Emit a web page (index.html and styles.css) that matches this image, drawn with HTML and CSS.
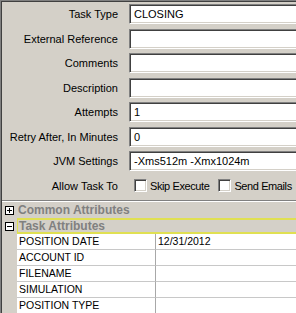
FILE: index.html
```html
<!DOCTYPE html>
<html>

<head>
    <title>Task Properties</title>
    <link rel="stylesheet" href="styles.css">
</head>

<body>
    <div class="panel">
        <div class="inner">
            <div class="form">
                <span class="label">Task Type</span>
                <div class="field">CLOSING</div>

                <span class="label">External Reference</span>
                <div class="field"></div>

                <span class="label">Comments</span>
                <div class="field"></div>

                <span class="label">Description</span>
                <div class="field"></div>

                <span class="label">Attempts</span>
                <div class="field">1</div>

                <span class="label">Retry After, In Minutes</span>
                <div class="field">0</div>

                <span class="label">JVM Settings</span>
                <div class="field">-Xms512m -Xmx1024m</div>

                <span class="label">Allow Task To</span>
                <div class="checks">
                    <span class="check"><span class="box"></span>Skip Execute</span>
                    <span class="check"><span class="box"></span>Send Emails</span>
                </div>
            </div>

            <div class="grid">
                <div class="cat">
                    <span class="margin">
                        <svg class="toggle" width="9" height="9" viewBox="0 0 9 9">
                            <rect x="0.5" y="0.5" width="8" height="8" fill="#fff" stroke="#000" />
                            <path d="M2 4.5h5M4.5 2v5" stroke="#000" />
                        </svg>
                    </span>
                    <span class="cat-name">Common Attributes</span>
                </div>
                <div class="cat selected">
                    <span class="margin">
                        <svg class="toggle" width="9" height="9" viewBox="0 0 9 9">
                            <rect x="0.5" y="0.5" width="8" height="8" fill="#fff" stroke="#000" />
                            <path d="M2 4.5h5" stroke="#000" />
                        </svg>
                    </span>
                    <span class="cat-name">Task Attributes</span>
                </div>
                <div class="prop">
                    <span class="margin"></span>
                    <span class="name">POSITION DATE</span>
                    <span class="value">12/31/2012</span>
                </div>
                <div class="prop">
                    <span class="margin"></span>
                    <span class="name">ACCOUNT ID</span>
                    <span class="value"></span>
                </div>
                <div class="prop">
                    <span class="margin"></span>
                    <span class="name">FILENAME</span>
                    <span class="value"></span>
                </div>
                <div class="prop">
                    <span class="margin"></span>
                    <span class="name">SIMULATION</span>
                    <span class="value"></span>
                </div>
                <div class="prop">
                    <span class="margin"></span>
                    <span class="name">POSITION TYPE</span>
                    <span class="value"></span>
                </div>
            </div>
        </div>
    </div>
</body>

</html>
```

FILE: styles.css
```css
body {
    margin: 0;
    padding: 0;
    overflow: hidden;
    background-color: #d4d0c8;
    font-family: "Liberation Sans", Arial, sans-serif;
    font-size: 11px;
    color: #000;
}

.panel {
    width: 320px;
    height: 330px;
    border-top: 1px solid #808080;
    border-left: 1px solid #808080;
}

.inner {
    height: 100%;
    border-top: 1px solid #404040;
    border-left: 1px solid #404040;
}

.form {
    display: grid;
    grid-template-columns: 116px 200px;
    grid-auto-rows: 20px;
    align-content: start;
    column-gap: 11px;
    row-gap: 4.5px;
    padding-top: 2px;
    height: 198px;
    box-sizing: border-box;
}

.label {
    align-self: center;
    text-align: right;
    white-space: nowrap;
}

.field {
    height: 20px;
    box-sizing: border-box;
    background-color: #fff;
    border-top: 1px solid #808080;
    border-left: 1px solid #808080;
    border-bottom: 1px solid #fff;
    box-shadow: inset 1px 1px 0 #404040, inset 0 -1px 0 #d4d0c8;
    padding: 3px 0 0 4px;
    white-space: nowrap;
}

.checks {
    display: flex;
    align-items: center;
    gap: 9px;
    padding-left: 5px;
    white-space: nowrap;
    letter-spacing: -0.4px;
}

.check {
    display: flex;
    align-items: center;
    gap: 3px;
}

.box {
    width: 13px;
    height: 13px;
    box-sizing: border-box;
    background-color: #fff;
    border-top: 1px solid #808080;
    border-left: 1px solid #808080;
    border-bottom: 1px solid #fff;
    border-right: 1px solid #fff;
    box-shadow: inset 1px 1px 0 #404040, inset -1px -1px 0 #d4d0c8;
}

.grid {
    border-top: 1px solid #808080;
    box-shadow: inset 0 1px 0 #fff;
    padding-top: 1px;
}

.cat,
.prop {
    display: flex;
    height: 16px;
}

.margin {
    width: 15px;
    flex-shrink: 0;
    display: flex;
    align-items: center;
    justify-content: center;
}

.toggle {
    display: block;
}

.cat-name {
    flex: 1;
    padding-left: 1px;
    font-weight: bold;
    font-size: 12px;
    color: #808080;
    line-height: 16px;
}

.cat.selected .cat-name {
    border-top: 2px solid #e0e052;
    border-bottom: 2px solid #e0e052;
    border-left: 1px solid #e0e052;
    line-height: 12px;
}

.name,
.value {
    background-color: #fff;
    border-bottom: 1px solid #c8c8c8;
    line-height: 15px;
    padding-left: 2px;
    font-size: 10.5px;
    white-space: nowrap;
}

.name {
    width: 136px;
    border-right: 1px solid #a8a8a8;
}

.value {
    flex: 1;
}
```
